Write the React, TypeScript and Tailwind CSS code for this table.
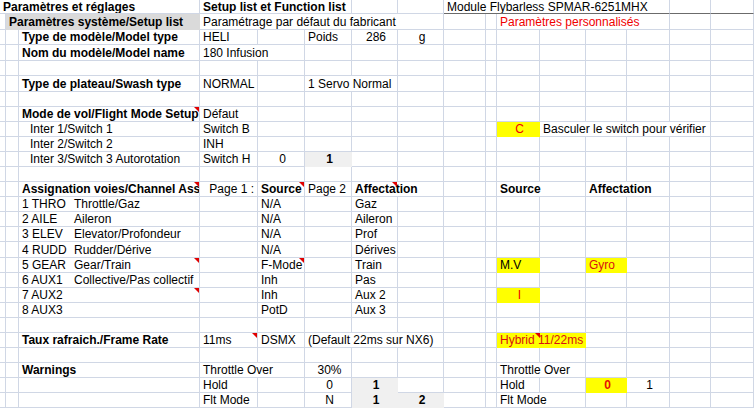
import type { ReactNode } from "react";

type Cell = {
  s?: number; // column span
  t?: ReactNode;
  c?: string; // extra classes (weight, align, colour)
  bg?: "gray" | "light" | "yellow";
  tri?: string; // position classes of the red comment marker
  dark?: boolean; // dark bottom border under the title row
};

const COLS =
  "grid grid-cols-[6px_13px_181px_58px_47px_47px_46px_46px_42px_11px_43px_46px_41px_43px_41px_43px]";

const SPAN: Record<number, string> = {
  1: "col-span-1",
  2: "col-span-2",
  3: "col-span-3",
  4: "col-span-4",
  5: "col-span-5",
  6: "col-span-6",
};

const FILL = {
  gray: "bg-[#dadada] border-r-[#dadada] border-b-[#dadada]",
  light: "bg-[#f0f0f0] border-r-[#f0f0f0] border-b-[#f0f0f0]",
  yellow: "bg-[#ffff00] border-r-[#ffff00] border-b-[#ffff00]",
};

const e: Cell = {};
const B = "font-bold";
const RED = "text-[#f00000]";
const MID = "justify-center pl-0";
const IND = "pl-[11px]";

// pad a row with empty cells up to 16 columns
function fill(cells: Cell[]): Cell[] {
  const used = cells.reduce((n, c) => n + (c.s ?? 1), 0);
  return [...cells, ...Array.from({ length: 16 - used }, () => e)];
}

const channels: [string, string, string, string][] = [
  ["1 THRO", "Throttle/Gaz", "N/A", "Gaz"],
  ["2 AILE", "Aileron", "N/A", "Aileron"],
  ["3 ELEV", "Elevator/Profondeur", "N/A", "Prof"],
  ["4 RUDD", "Rudder/Dérive", "N/A", "Dérives"],
  ["5 GEAR", "Gear/Train", "F-Mode", "Train"],
  ["6 AUX1", "Collective/Pas collectif", "Inh", "Pas"],
  ["7 AUX2", "", "Inh", "Aux 2"],
  ["8 AUX3", "", "PotD", "Aux 3"],
];

function channelRow(i: number): Cell[] {
  const [num, name, src, aff] = channels[i];
  const label = (
    <>
      <span className="inline-block w-[52px]">{num}</span>
      {name}
    </>
  );
  const tri = i === 4 || i === 6 ? "right-0" : undefined;
  const right: Cell[] =
    i === 4
      ? [{ t: "M.V", bg: "yellow" }, e, { t: "Gyro", bg: "yellow", c: "text-[#d81010]" }]
      : i === 6
        ? [{ t: "I", bg: "yellow", c: `${RED} ${MID}` }]
        : [];
  return fill([
    e, e,
    { t: label, tri },
    e,
    { t: src, tri: i === 4 ? "right-0" : undefined },
    e,
    { t: aff },
    e, e, e,
    ...right,
  ]);
}

const rows: { h: string; cells: Cell[] }[] = [
  {
    h: "h-[14px]",
    cells: [
      { s: 3, t: "Paramètres et réglages", c: `${B} pl-[2px]` },
      { s: 3, t: "Setup list et Function list", c: B },
      e, e,
      { s: 6, t: "Module Flybarless SPMAR-6251MHX", dark: true },
      { dark: true }, { dark: true },
    ],
  },
  {
    h: "h-[16px]",
    cells: fill([
      e,
      { s: 2, t: "Paramètres système/Setup list", c: B, bg: "gray" },
      { s: 5, t: "Paramétrage par défaut du fabricant" },
      e, e,
      { s: 4, t: "Paramètres personnalisés", c: RED },
    ]),
  },
  {
    h: "h-[15px]",
    cells: fill([
      e, e,
      { t: "Type de modèle/Model type", c: B },
      { t: "HELI" }, e, { t: "Poids" },
      { t: "286", c: MID }, { t: "g", c: MID },
    ]),
  },
  { h: "h-[16px]", cells: fill([e, e, { t: "Nom du modèle/Model name", c: B }, { s: 2, t: "180 Infusion" }]) },
  { h: "h-[15px]", cells: fill([]) },
  {
    h: "h-[16px]",
    cells: fill([e, e, { t: "Type de plateau/Swash type", c: B }, { t: "NORMAL" }, e, { s: 2, t: "1 Servo Normal" }]),
  },
  { h: "h-[15px]", cells: fill([]) },
  {
    h: "h-[15px]",
    cells: fill([e, e, { t: "Mode de vol/Flight Mode Setup", c: B, tri: "right-0" }, { t: "Défaut" }]),
  },
  {
    h: "h-[15px]",
    cells: fill([
      e, e,
      { t: "Inter 1/Switch 1", c: IND },
      { t: "Switch B" },
      e, e, e, e, e, e,
      { t: "C", bg: "yellow", c: `${RED} ${MID}` },
      { s: 4, t: "Basculer le switch pour vérifier" },
    ]),
  },
  { h: "h-[15px]", cells: fill([e, e, { t: "Inter 2/Switch 2", c: IND }, { t: "INH" }]) },
  {
    h: "h-[15px]",
    cells: fill([
      e, e,
      { t: "Inter 3/Switch 3 Autorotation", c: IND },
      { t: "Switch H" },
      { t: "0", c: MID },
      { t: "1", c: `${B} ${MID}`, bg: "light" },
    ]),
  },
  { h: "h-[15px]", cells: fill([]) },
  {
    h: "h-[15px]",
    cells: fill([
      e, e,
      { t: "Assignation voies/Channel Assi", c: B, tri: "right-0" },
      { t: "Page 1 :", c: "justify-end pr-[3px]" },
      { t: "Source", c: B, tri: "right-0" },
      { t: "Page 2" },
      { s: 2, t: "Affectation", c: B, tri: "left-[40px]" },
      e, e,
      { s: 2, t: "Source", c: B },
      { s: 2, t: "Affectation", c: B },
    ]),
  },
  ...channels.map((_, i) => ({ h: i === 3 ? "h-[16px]" : "h-[15px]", cells: channelRow(i) })),
  { h: "h-[15px]", cells: fill([]) },
  {
    h: "h-[15px]",
    cells: fill([
      e, e,
      { t: "Taux rafraich./Frame Rate", c: B },
      { t: "11ms", tri: "right-0" },
      { t: "DSMX" },
      { s: 3, t: "(Default 22ms sur NX6)" },
      e, e,
      { s: 2, t: "Hybrid 11/22ms", bg: "yellow", c: "text-[#d81010]", tri: "left-[38px]" },
    ]),
  },
  { h: "h-[15px]", cells: fill([]) },
  {
    h: "h-[15px]",
    cells: fill([
      e, e,
      { t: "Warnings", c: B },
      { s: 2, t: "Throttle Over" },
      { t: "30%", c: MID },
      e, e, e, e,
      { s: 2, t: "Throttle Over" },
    ]),
  },
  {
    h: "h-[15px]",
    cells: fill([
      e, e, e,
      { t: "Hold" },
      e,
      { t: "0", c: MID },
      { t: "1", c: `${B} ${MID}`, bg: "light" },
      e, e, e,
      { t: "Hold" },
      e,
      { t: "0", c: `${B} ${MID} text-[#e81000]`, bg: "yellow" },
      { t: "1", c: MID },
    ]),
  },
  {
    h: "h-[15px]",
    cells: fill([
      e, e, e,
      { t: "Flt Mode" },
      e,
      { t: "N", c: MID },
      { t: "1", c: `${B} ${MID}`, bg: "light" },
      { t: "2", c: `${B} ${MID}`, bg: "light" },
      e, e,
      { s: 2, t: "Flt Mode" },
    ]),
  },
];

function XlCell({ cell }: { cell: Cell }) {
  const lines = cell.bg
    ? FILL[cell.bg]
    : `border-r-[#d0d7e5] ${cell.dark ? "border-b-[#6b6b6b]" : "border-b-[#d0d7e5]"}`;
  return (
    <div
      className={`relative flex items-center overflow-hidden whitespace-nowrap border-r border-b pl-[3px] leading-[14px] ${SPAN[cell.s ?? 1]} ${lines} ${cell.c ?? ""}`}
    >
      {cell.t}
      {cell.tri && (
        <span
          className={`absolute top-0 h-0 w-0 border-t-[5px] border-l-[5px] border-t-[#e00000] border-l-transparent ${cell.tri}`}
        />
      )}
    </div>
  );
}

export default function App() {
  return (
    <div className="h-[408px] w-[754px] overflow-hidden bg-white font-['Liberation_Sans',Arial,sans-serif] text-[12px] text-black">
      {rows.map((r, ri) => (
        <div key={ri} className={`${COLS} ${r.h}`}>
          {r.cells.map((c, ci) => (
            <XlCell key={ci} cell={c} />
          ))}
        </div>
      ))}
    </div>
  );
}
